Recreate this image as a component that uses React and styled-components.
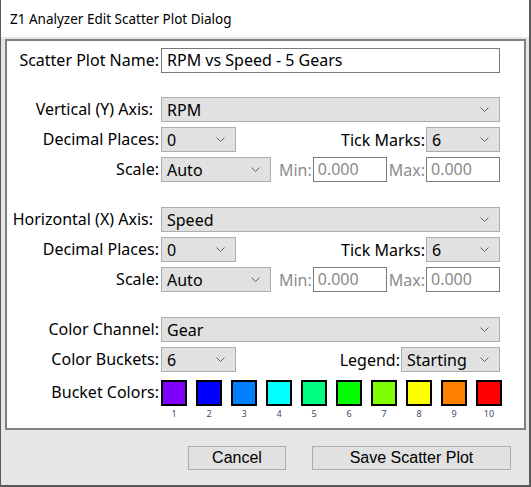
import React from 'react';
import styled, { createGlobalStyle } from 'styled-components';

const GlobalStyle = createGlobalStyle`
  html, body {
    margin: 0;
    padding: 0;
    background: #e6e6e6;
  }
  * {
    box-sizing: border-box;
  }
`;

const UI = '"Noto Sans", "Open Sans", sans-serif';

const bucketColors = [
  '#8000ff', '#0000ff', '#0080ff', '#00ffff', '#00ff80',
  '#00ff00', '#80ff00', '#ffff00', '#ff8000', '#ff0000',
];

const Chevron = () => (
  <svg width="9" height="5" viewBox="0 0 9 5">
    <path d="M0.5 0.5 L4.5 4.5 L8.5 0.5" fill="none" stroke="#606060" strokeWidth="1" />
  </svg>
);

const Select = ({ value, width }) => (
  <SelectBox $width={width}>
    <span>{value}</span>
    <Chevron />
  </SelectBox>
);

const App = () => {
  return (
    <>
      <GlobalStyle />
      <Window>
        <TitleBar>Z1 Analyzer Edit Scatter Plot Dialog</TitleBar>
        <Panel>
          <Row>
            <Label>Scatter Plot Name:</Label>
            <TextInput>RPM vs Speed - 5 Gears</TextInput>
          </Row>
          <Separator />

          <Section>
            <Row>
              <Label $trail>Vertical (Y) Axis:</Label>
              <Select value="RPM" />
            </Row>
            <Row>
              <Label>Decimal Places:</Label>
              <Select value="0" width={75} />
              <SideLabel>Tick Marks:</SideLabel>
              <Select value="6" width={74} />
            </Row>
            <Row>
              <Label>Scale:</Label>
              <Select value="Auto" width={110} />
              <SideLabel $disabled>Min:</SideLabel>
              <NumInput>0.000</NumInput>
              <SideLabel $disabled $fixed>Max:</SideLabel>
              <NumInput>0.000</NumInput>
            </Row>
          </Section>

          <Section>
            <Row>
              <Label $trail>Horizontal (X) Axis:</Label>
              <Select value="Speed" />
            </Row>
            <Row>
              <Label>Decimal Places:</Label>
              <Select value="0" width={75} />
              <SideLabel>Tick Marks:</SideLabel>
              <Select value="6" width={74} />
            </Row>
            <Row>
              <Label>Scale:</Label>
              <Select value="Auto" width={110} />
              <SideLabel $disabled>Min:</SideLabel>
              <NumInput>0.000</NumInput>
              <SideLabel $disabled $fixed>Max:</SideLabel>
              <NumInput>0.000</NumInput>
            </Row>
          </Section>

          <Section>
            <Row>
              <Label>Color Channel:</Label>
              <Select value="Gear" />
            </Row>
            <Row>
              <Label>Color Buckets:</Label>
              <Select value="6" width={75} />
              <SideLabel>Legend:</SideLabel>
              <Select value="Starting" width={99} />
            </Row>
            <SwatchRow>
              <Label>Bucket Colors:</Label>
              <Swatches>
                {bucketColors.map((c, i) => (
                  <SwatchItem key={c}>
                    <Swatch $color={c} />
                    <SwatchNum>{i + 1}</SwatchNum>
                  </SwatchItem>
                ))}
              </Swatches>
            </SwatchRow>
          </Section>
        </Panel>
        <Footer>
          <Button $width={98}>Cancel</Button>
          <Button $width={199}>Save Scatter Plot</Button>
        </Footer>
      </Window>
    </>
  );
};

export default App;

const Window = styled.div`
  width: 531px;
  height: 487px;
  background: #e6e6e6;
  border-left: 1px solid #5a5a5a;
  border-right: 2px solid #5a5a5a;
  border-bottom: 2px solid #5a5a5a;
  display: flex;
  flex-direction: column;
  font-family: ${UI};
  color: #000;
`;

const TitleBar = styled.div`
  height: 37px;
  background: #fff;
  padding-left: 9px;
  display: flex;
  align-items: center;
  font-size: 13.5px;
  color: #000;
`;

const Panel = styled.div`
  margin: 2px 3px 0 4px;
  height: 391px;
  border: 2px solid #808080;
  background: #fff;
  padding: 7px 24px 0 0;
  display: flex;
  flex-direction: column;
`;

const Section = styled.div`
  display: flex;
  flex-direction: column;
  gap: 5px;
  margin-bottom: 25px;
`;

const Row = styled.div`
  display: flex;
  align-items: center;
  height: 25px;
`;

const SwatchRow = styled.div`
  display: flex;
  align-items: flex-start;
  margin-top: 3px;
`;

const Label = styled.div`
  width: 152px;
  flex: none;
  text-align: right;
  padding-right: ${(p) => (p.$trail ? '6px' : '0')};
  margin-right: 2px;
  font-size: 16px;
  white-space: nowrap;
  line-height: 25px;
`;

const SideLabel = styled.div`
  flex: ${(p) => (p.$fixed ? 'none' : '1')};
  text-align: right;
  font-size: 16px;
  padding-left: ${(p) => (p.$fixed ? '2px' : '0')};
  margin-right: 1px;
  white-space: nowrap;
  color: ${(p) => (p.$disabled ? '#8c8c8c' : '#000')};
`;

const TextInput = styled.div`
  flex: 1;
  height: 25px;
  border: 1px solid #7a7a7a;
  background: #fff;
  padding-left: 5px;
  font-size: 16px;
  line-height: 22px;
`;

const NumInput = styled.div`
  width: 74px;
  flex: none;
  height: 25px;
  border: 1px solid #7a7a7a;
  background: #fff;
  padding-left: 4px;
  font-size: 16px;
  line-height: 22px;
  color: #8a8a8a;
`;

const SelectBox = styled.div`
  flex: ${(p) => (p.$width ? 'none' : '1')};
  width: ${(p) => (p.$width ? `${p.$width}px` : 'auto')};
  height: 25px;
  background: #e1e1e1;
  border: 1px solid #adadad;
  display: flex;
  align-items: center;
  justify-content: space-between;
  padding: 0 10px 0 5px;
  font-size: 16px;
  span {
    line-height: 22px;
  }
  svg {
    flex: none;
  }
`;

const Separator = styled.div`
  height: 1px;
  background: #cfcfcf;
  margin: 14px -10px 10px 14px;
`;

const Swatches = styled.div`
  display: flex;
  gap: 9px;
`;

const SwatchItem = styled.div`
  display: flex;
  flex-direction: column;
  align-items: center;
  width: 26px;
`;

const Swatch = styled.div`
  width: 26px;
  height: 26px;
  border: 2px solid #000;
  background: ${(p) => p.$color};
`;

const SwatchNum = styled.div`
  font-size: 9px;
  line-height: 11px;
  margin-top: 2px;
  color: #3a4a66;
`;

const Footer = styled.div`
  flex: 1;
  display: flex;
  justify-content: flex-end;
  align-items: flex-start;
  gap: 26px;
  padding: 16px 18px 0 0;
`;

const Button = styled.button`
  width: ${(p) => p.$width}px;
  height: 24px;
  background: #e1e1e1;
  border: 1px solid #adadad;
  font-family: "Liberation Sans", Arial, sans-serif;
  font-size: 16px;
  color: #000;
  padding: 0;
`;
